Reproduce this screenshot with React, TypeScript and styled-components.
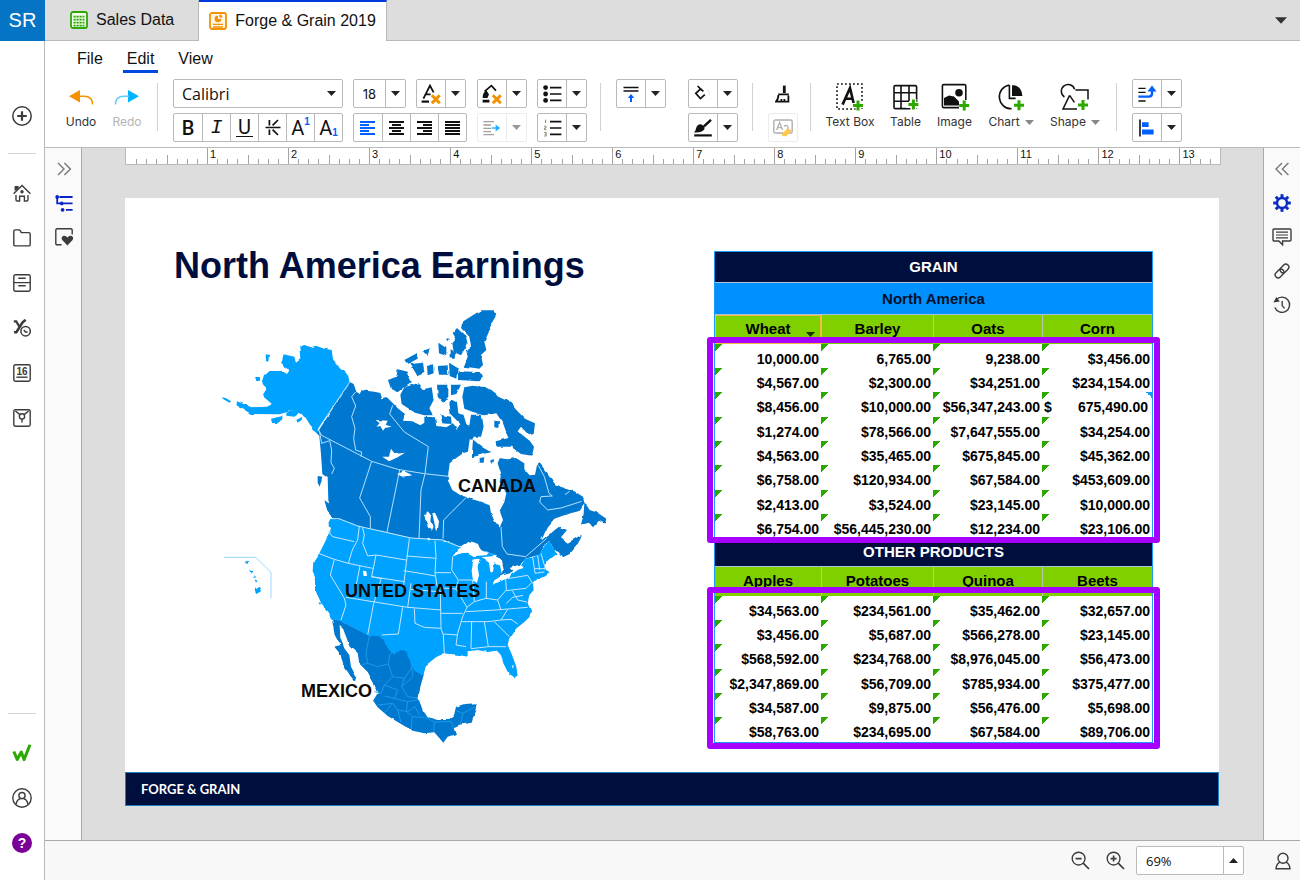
import React from "react";
import styled, { createGlobalStyle, css } from "styled-components";

const sans = `"Liberation Sans", Arial, sans-serif`;
const navy = "#000e3d";
const line = "#b9b9b9";
const ink = "#111";
const blue = "#0060ff";
const orange = "#f39200";
const green = "#2ca800";

const GlobalStyle = createGlobalStyle`
  * { box-sizing: border-box; }
  body { margin: 0; background: #fff; font-family: ${sans}; color: ${ink}; }
  button, input, select { font: inherit; color: inherit; margin: 0; }
  button { background: none; border: 0; padding: 0; cursor: pointer; }
  svg { display: block; }
`;

/* ---------- frame ---------- */

const Shell = styled.div`
  display: flex;
  min-height: 100vh;
`;

const Rail = styled.nav`
  display: flex;
  flex-direction: column;
  flex: 0 0 45px;
  padding-bottom: 15px;
  background: #fff;
  border-right: 1px solid ${line};
`;

const Account = styled.a`
  display: flex;
  align-items: center;
  justify-content: center;
  height: 41px;
  margin: 0 -1px 52px 0;
  background: #0674c4;
  color: #fff;
  font-size: 20px;
  text-decoration: none;
`;

const RailButton = styled.button`
  display: flex;
  align-items: center;
  justify-content: center;
  height: 45px;
`;

const RailRule = styled.hr<{ $push?: boolean }>`
  width: 28px;
  height: 1px;
  margin: ${(p) => (p.$push ? "auto" : "15px")} 8px 16px;
  border: 0;
  background: #d5d5d5;
`;

const Main = styled.div`
  display: flex;
  flex-direction: column;
  flex: 1;
  min-width: 0;
`;

const TabBar = styled.div`
  display: flex;
  height: 41px;
  background: #ddd;
  border-bottom: 1px solid ${line};
`;

const Tab = styled.button<{ $active?: boolean }>`
  display: flex;
  align-items: center;
  gap: 8px;
  height: 41px;
  padding: 0 24px 0 25px;
  font-size: 16px;
  white-space: nowrap;
  border-right: 1px solid ${line};
  border-bottom: 1px solid ${line};
  ${(p) =>
    p.$active &&
    css`
      padding: 0 10px 2px;
      background: #fff;
      border-top: 2px solid #0039dd;
      border-bottom: 0;
    `}
`;

const TabMore = styled.button`
  margin-left: auto;
  padding: 0 13px;
`;

const Menu = styled.nav`
  display: flex;
  gap: 16px;
  padding: 4px 28px 0;
`;

const MenuLink = styled.a<{ $active?: boolean }>`
  padding: 4px 4px 1px;
  font-size: 16px;
  line-height: 20px;
  color: ${ink};
  text-decoration: none;
  border-bottom: 3px solid ${(p) => (p.$active ? "#0049e0" : "transparent")};
`;

/* ---------- toolbar ---------- */

const Toolbar = styled.div`
  display: flex;
  align-items: flex-start;
  height: 75px;
  padding: 6px 0 0 11px;
  border-bottom: 1px solid ${line};
`;

const Stack = styled.div<{ $after?: number }>`
  display: flex;
  flex-direction: column;
  gap: 5px;
  margin-right: ${(p) => p.$after ?? 10}px;
`;

const Line = styled.div`
  display: flex;
  gap: 10px;
`;

const Group = styled.div<{ $faint?: boolean; $bare?: boolean }>`
  display: flex;
  height: 29px;
  background: #fff;
  border: 1px solid ${(p) => (p.$bare ? "transparent" : p.$faint ? "#ececec" : line)};
  border-radius: 2px;
  > * + * {
    border-left: 1px solid ${(p) => (p.$faint ? "#ececec" : line)};
  }
`;

const Cell = styled.button<{ $narrow?: boolean }>`
  display: flex;
  align-items: center;
  justify-content: center;
  width: ${(p) => (p.$narrow ? 20 : 28)}px;
  height: 27px;
`;

const Letter = styled.span<{ $kind: "bold" | "italic" | "under" | "plain" }>`
  font-size: 20px;
  line-height: 24px;
  font-family: ${(p) => (p.$kind === "italic" ? `"Liberation Mono", monospace` : "Roboto, sans-serif")};
  font-weight: ${(p) => (p.$kind === "bold" ? 500 : 400)};
  font-style: ${(p) => (p.$kind === "italic" ? "italic" : "normal")};
  ${(p) =>
    p.$kind === "under" &&
    css`
      line-height: 18px;
      padding: 0 2px;
      border-bottom: 1px solid ${ink};
    `}
`;

const Script = styled.span<{ $low?: boolean }>`
  align-self: ${(p) => (p.$low ? "flex-end" : "flex-start")};
  padding: 3px 0;
  font-size: 10px;
  line-height: 10px;
  font-weight: 700;
  color: ${blue};
`;

const FontBox = styled.label`
  display: flex;
  align-items: center;
  width: 170px;
  height: 29px;
  padding-right: 6px;
  border: 1px solid ${line};
  border-radius: 2px;
  background: #fff;
`;

const FontSelect = styled.select`
  flex: 1;
  min-width: 0;
  height: 27px;
  padding: 0 8px;
  font: 16px "Open Sans", sans-serif;
  border: 0;
  background: transparent;
  appearance: none;
`;

const SizeInput = styled.input`
  width: 31px;
  height: 27px;
  padding: 0;
  font: 13px Inter, sans-serif;
  text-align: center;
  border: 0;
  background: transparent;
`;

const Rule = styled.div<{ $before: number; $after: number }>`
  flex: 0 0 1px;
  height: 48px;
  margin: 4px ${(p) => p.$after}px 0 ${(p) => p.$before}px;
  background: #d2d2d2;
`;

const Tool = styled.button<{ $w: number; $off?: boolean }>`
  display: flex;
  flex-direction: column;
  align-items: center;
  width: ${(p) => p.$w}px;
  font-family: Inter, sans-serif;
  font-size: 12px;
  line-height: 14px;
  color: ${(p) => (p.$off ? "#b5b5b5" : "#333")};
`;

const Glyph = styled.span`
  display: flex;
  align-items: center;
  justify-content: center;
  height: 36px;
`;

const ToolLabel = styled.span`
  display: flex;
  align-items: center;
  gap: 5px;
  white-space: nowrap;
`;

/* ---------- workspace ---------- */

const Workspace = styled.div`
  display: flex;
  flex: 1;
`;

const SidePanel = styled.aside<{ $right?: boolean }>`
  display: flex;
  flex-direction: column;
  flex: 0 0 37px;
  padding-top: 4px;
  background: #fafafa;
  ${(p) =>
    p.$right
      ? css`
          padding-right: 1px;
          border-left: 1px solid #a9a9a9;
        `
      : css`
          padding-left: 2px;
          border-right: 1px solid #a9a9a9;
        `}
`;

const PanelButton = styled.button`
  display: flex;
  align-items: center;
  justify-content: center;
  height: 34px;
`;

const Canvas = styled.main`
  display: flex;
  flex-direction: column;
  flex: 1;
  min-width: 0;
  padding: 0 44px 34px 43px;
  background: #ddd;
`;

const Ruler = styled.div`
  display: flex;
  height: 17px;
  margin: 0 -2px 33px 0;
  background: #fff;
  border: 1px solid ${line};
  border-top: 0;
`;

const Inch = styled.div<{ $ticks: number }>`
  position: relative;
  display: flex;
  align-items: flex-end;
  flex: ${(p) => p.$ticks} 1 0;
`;

const Tick = styled.span<{ $h: number }>`
  flex: 1;
  height: ${(p) => p.$h}px;
  border-left: 1px solid ${(p) => (p.$h ? "#a5a5a5" : "transparent")};
`;

const InchLabel = styled.span`
  position: absolute;
  left: 3px;
  top: 0;
  font-size: 11px;
  line-height: 12px;
`;

const Slide = styled.article`
  display: flex;
  flex-direction: column;
  background: #fff;
`;

const SlideBody = styled.div`
  display: flex;
  justify-content: space-between;
  height: 574px;
  padding-right: 66px;
`;

const Story = styled.section`
  padding: 47px 0 0 49px;
`;

const Title = styled.h1`
  margin: 0 0 13px;
  font-size: 36px;
  line-height: 42px;
  color: ${navy};
`;

const MapFigure = styled.figure`
  margin: 0 0 0 37px;
`;

const SlideFooter = styled.footer`
  height: 34px;
  padding-left: 15px;
  font: 700 13px/32px Lato, sans-serif;
  color: #fff;
  background: ${navy};
  border: 1px solid #1d7fc4;
`;

/* ---------- tables ---------- */

const Report = styled.section`
  position: relative;
  margin-top: 53px;
  width: 439px;
`;

const Grid = styled.table`
  width: 100%;
  table-layout: fixed;
  border-collapse: separate;
  border-spacing: 0;
  border: 1px solid #1a9cf5;
  font-weight: 700;
  color: #000;
`;

const Banner = styled.th<{ $tone: "navy" | "sky"; $h: number }>`
  height: ${(p) => p.$h}px;
  padding: 0;
  font-size: 15px;
  line-height: 16px;
  color: ${(p) => (p.$tone === "navy" ? "#fff" : "#00102a")};
  background: ${(p) => (p.$tone === "navy" ? navy : "#0090ff")};
  border-bottom: 1px solid #a9c4d8;
`;

const ColHead = styled.th<{ $selected?: boolean }>`
  position: relative;
  height: 29px;
  padding: 0 0 2px;
  font-size: 15px;
  line-height: 16px;
  background: #80d000;
  border-left: 1px solid #bcc6ae;
  &:first-child { border-left: 0; }
  ${(p) =>
    p.$selected &&
    css`
      box-shadow: inset 0 0 0 1px #f0b848;
    `}
`;

const FilterMark = styled.button`
  position: absolute;
  right: 6px;
  bottom: 7px;
`;

const Row = styled.tr`
  height: 24px;
  &:nth-child(3n) { height: 25px; }
`;

const Amount = styled.td<{ $note?: boolean }>`
  padding: 5px 2px 0 0;
  font-size: 14px;
  line-height: 18px;
  text-align: right;
  white-space: nowrap;
  background:
    linear-gradient(135deg, ${green} 50%, transparent 50%) 0 0 / 8px 8px no-repeat
    ${(p) => (p.$note ? ", linear-gradient(225deg, #1a9cf5 50%, transparent 50%) 100% 0 / 6px 6px no-repeat" : "")};
`;

const Split = styled.span`
  display: flex;
  justify-content: space-between;
  padding: 0 2px;
`;

const Highlight = styled.div<{ $top: number; $h: number }>`
  position: absolute;
  left: -7px;
  right: -7px;
  top: ${(p) => p.$top}px;
  height: ${(p) => p.$h}px;
  border: 6px solid #a600ff;
  border-radius: 3px;
  pointer-events: none;
`;

/* ---------- status bar ---------- */

const StatusBar = styled.footer`
  display: flex;
  align-items: center;
  justify-content: flex-end;
  gap: 16px;
  height: 40px;
  padding-right: 9px;
  background: #f8f8f8;
  border-top: 1px solid #a9a9a9;
`;

const ZoomBox = styled(Group)`
  margin: 0 15px 0 -5px;
`;

const ZoomInput = styled.input`
  width: 86px;
  height: 27px;
  padding: 0 9px;
  font: 13px "Open Sans", sans-serif;
  border: 0;
`;

/* ---------- icons ---------- */

type ArtProps = { w: number; h: number; vb?: string; children: React.ReactNode };
const Art = ({ w, h, vb, children }: ArtProps) => (
  <svg width={w} height={h} viewBox={vb ?? `0 0 ${w} ${h}`} fill="none" stroke="#3c3c3c" strokeWidth="1.4" aria-hidden="true">
    {children}
  </svg>
);

const Caret = ({ color = "#222", up = false, big = false }: { color?: string; up?: boolean; big?: boolean }) => (
  <Art w={big ? 12 : 9} h={big ? 7 : 5} vb="0 0 9 5">
    <path d={up ? "M0 5L4.5 0L9 5Z" : "M0 0L9 0L4.5 5Z"} fill={color} stroke="none" />
  </Art>
);

const Plus = ({ x, y }: { x: number; y: number }) => (
  <path d={`M${x - 5} ${y}H${x + 5}M${x} ${y - 5}V${y + 5}`} stroke={green} strokeWidth="3" />
);

const Cross = ({ x, y }: { x: number; y: number }) => (
  <path d={`M${x - 4} ${y - 4}L${x + 4} ${y + 4}M${x + 4} ${y - 4}L${x - 4} ${y + 4}`} stroke={orange} strokeWidth="3" />
);

const icons = {
  sheet: (
    <Art w={18} h={18}>
      <rect x="1" y="1" width="16" height="16" rx="2" stroke={green} strokeWidth="1.8" fill="#f4fcee" />
      <path d="M3.5 5.6H14.5M3.5 8.6H14.5M3.5 11.6H14.5M3.5 14.6H14.5" stroke={green} strokeWidth="1.9" strokeDasharray="2.2 .8" />
    </Art>
  ),
  deck: (
    <Art w={18} h={18}>
      <rect x="1" y="1" width="16" height="16" rx="2" stroke={orange} strokeWidth="1.8" fill="#fff6e6" />
      <path d="M9 3.4A3.4 3.4 0 1 0 12.4 7H9Z" fill={orange} stroke="none" />
      <path d="M10.4 2.6V5.6H13.4A3 3 0 0 0 10.4 2.6Z" fill={orange} stroke="none" />
      <path d="M4 12.3H14M4 15H14" stroke={orange} strokeWidth="1.3" />
    </Art>
  ),
  plus: (
    <Art w={20} h={20}>
      <circle cx="10" cy="10" r="9.2" strokeWidth="1.5" />
      <path d="M10 5.2V14.8M5.2 10H14.8" strokeWidth="2.2" />
    </Art>
  ),
  home: (
    <Art w={18} h={18}>
      <path d="M.6 9.8L9 1.4L17.4 9.8M3 11V15.8Q3 17 4.2 17H6.6V12.2H11.4V17H13.8Q15 17 15 15.8V11" />
      <path d="M1.6 2H5.6V4.6L1.6 7Z" fill="#3c3c3c" stroke="none" />
      <circle cx="9" cy="7.8" r="1.7" fill="#3c3c3c" stroke="none" />
    </Art>
  ),
  folder: (
    <Art w={18} h={18}>
      <path d="M.8 15.4V2.4Q.8 .9 2.3 .9H5.9Q7 .9 7.4 1.9L8.2 3.6H15.7Q17.2 3.6 17.2 5.1V15.4Q17.2 16.9 15.7 16.9H2.3Q.8 16.9 .8 15.4Z" />
    </Art>
  ),
  drawer: (
    <Art w={18} h={18}>
      <rect x=".8" y=".8" width="16.4" height="16.4" rx="1.6" />
      <path d="M.8 8.6H17.2M5.3 4.2H12.7M5.3 11.8H12.7" />
    </Art>
  ),
  formula: (
    <Art w={18} h={18}>
      <path d="M.8 2.4H3.2L6.4 7.6" strokeWidth="2.2" />
      <path d="M12.6 .8L9.4 3.6L3.4 13.2H1" strokeWidth="2.6" />
      <circle cx="12.6" cy="12.2" r="4.7" fill="#fff" strokeWidth="1.5" />
      <path d="M10.8 11L12.4 13H14.6" strokeWidth="1.3" />
    </Art>
  ),
  image: (
    <Art w={18} h={18}>
      <rect x=".8" y=".8" width="16.4" height="16.4" rx="1.6" />
      <path d="M2.4 2L6.6 5.4M15.6 2L11.4 5.4M9 9.6V13.6" />
      <circle cx="9" cy="7.4" r="2.6" fill="#fff" />
    </Art>
  ),
  brand: (
    <Art w={20} h={18}>
      <path d="M1.8 7.5L5.2 15.4L9.3 8L12 15.6L18 .8" stroke={green} strokeWidth="3" strokeLinejoin="round" />
    </Art>
  ),
  user: (
    <Art w={20} h={20}>
      <circle cx="10" cy="10" r="9.2" />
      <circle cx="10" cy="7.6" r="3.1" />
      <path d="M4 16.4Q5.2 11 8.4 10.8M16 16.4Q14.8 11 11.6 10.8" />
    </Art>
  ),
  undo: (
    <Art w={26} h={16}>
      <path d="M1 7.3L12 1V13.6Z" fill={orange} stroke="none" />
      <path d="M11 7.3H16Q24.6 7.3 24.6 15.6" stroke={orange} />
    </Art>
  ),
  redo: (
    <Art w={26} h={16}>
      <path d="M25 7.3L14 1V13.6Z" fill="#00b4ff" stroke="none" />
      <path d="M15 7.3H10Q1.4 7.3 1.4 15.6" stroke="#5fccff" />
    </Art>
  ),
  strike: (
    <Art w={16} h={17}>
      <path d="M4.4 1V6.4M4.4 10.6V16M13 1L7.6 6.4M7.6 10.6L13 16M.5 8.5H15.5" stroke={ink} strokeWidth="1.7" />
    </Art>
  ),
  textColor: (
    <Art w={20} h={20}>
      <path d="M2.4 14.6L9 1.6L12.6 8.4M5 10.4H9.6" stroke={ink} strokeWidth="1.8" />
      <path d="M.6 17.6H8" stroke={ink} strokeWidth="2.2" />
      <Cross x={14.8} y={15.2} />
    </Art>
  ),
  fillClear: (
    <Art w={20} h={20}>
      <path d="M2.6 7.4L9.4 1.6L14 6.6" stroke={ink} strokeWidth="1.7" />
      <path d="M4.2 6L7 10.6L5.4 14H.8Q0 10 4.2 6ZM.6 15.8H7.4V18.4H.6Z" fill={ink} stroke="none" />
      <Cross x={14.8} y={15.2} />
    </Art>
  ),
  bullets: (
    <Art w={19} h={18}>
      <g fill={ink} stroke="none">
        <circle cx="2.6" cy="2.6" r="2.4" />
        <circle cx="2.6" cy="9" r="2.4" />
        <circle cx="2.6" cy="15.4" r="2.4" />
      </g>
      <path d="M7 2.6H18.4M7 9H18.4M7 15.4H18.4" stroke={ink} strokeWidth="1.6" />
    </Art>
  ),
  numbers: (
    <Art w={19} h={18}>
      <path d="M2.6 .6V4M1.2 7.2H3V9H1.4V10.6H3.4M1.2 13.4H3.2V17H1.2M1.6 15.2H3" stroke="#8b8b70" strokeWidth="1" />
      <path d="M7 2.6H18.4M7 9H18.4M7 15.4H18.4" stroke={ink} strokeWidth="1.6" />
    </Art>
  ),
  indent: (
    <Art w={18} h={16}>
      <path d="M.4 1.6H11M.4 5H8M.4 8.4H8M.4 11.6H8M.4 14.6H11" stroke="#a0a0a0" strokeWidth="1.3" />
      <path d="M8.6 8H14" stroke="#22b0ff" />
      <path d="M12.6 4.4L17.2 8L12.6 11.6Z" fill="#22b0ff" stroke="none" />
    </Art>
  ),
  vertical: (
    <Art w={16} h={18}>
      <path d="M.5 2.4H15.5M.5 6H15.5" stroke={ink} strokeWidth="1.5" />
      <path d="M8 10V17" stroke={blue} strokeWidth="2" />
      <path d="M4.8 13L8 9L11.2 13Z" fill={blue} stroke="none" />
    </Art>
  ),
  bucket: (
    <Art w={20} h={18}>
      <path d="M4.6 1L7.6 4L2.8 8.4L7.4 13.6L11.8 9.6M7.6 4L10.4 6.4" stroke={ink} strokeWidth="1.7" />
      <path d="M14 4.4Q17 7.4 16.6 11" stroke="#ececec" />
    </Art>
  ),
  pen: (
    <Art w={20} h={18}>
      <path d="M11 7.4L18 .8" stroke={ink} strokeWidth="2.4" />
      <path d="M.8 13.4Q2.6 12.4 3 9.4Q4.4 4.8 8.4 5.4Q12.8 7 11.2 10.6Q8.6 14 .8 13.4Z" fill={ink} stroke="none" />
      <path d="M1.2 16.4H18.8" stroke={ink} strokeWidth="2.2" />
    </Art>
  ),
  painter: (
    <Art w={16} h={18}>
      <path d="M9.3 .6V8" stroke={ink} strokeWidth="2.8" />
      <path d="M3.2 9.4H13.8M3.4 10Q3.4 14.4 1 16.6H13.4V10.4M6.4 16V14M9.4 16V14" stroke={ink} strokeWidth="1.8" />
    </Art>
  ),
  clearFormat: (
    <Art w={21} h={18}>
      <rect x=".8" y="1" width="18.4" height="13" rx="1.6" stroke="#b0b0b0" fill="#fff" />
      <path d="M3.6 11L6.6 3.6L9.6 11M4.8 8.6H8.4M11 7Q15 5.4 15 9V11" stroke="#b5b5b5" />
      <path d="M8.6 15L14.4 9.4L19 11.6L13.2 17.2H9.6Z" fill="#ffc84a" stroke="none" />
    </Art>
  ),
  textBox: (
    <Art w={30} h={30}>
      <rect x="2" y="2" width="25" height="25" stroke={ink} strokeWidth="1.6" strokeDasharray="1.8 2.2" />
      <path d="M7.6 22.6L15 6L18.6 21M9.8 16.8H17" stroke={ink} strokeWidth="2.6" />
      <path d="M17 23.4H29M23 17.4V29" stroke="#fff" strokeWidth="5" />
      <Plus x={23} y={23.4} />
    </Art>
  ),
  table: (
    <Art w={28} h={28}>
      <rect x="2" y="2.6" width="22.6" height="23" rx="1.4" stroke={ink} strokeWidth="1.6" />
      <path d="M2 9.8H24.6M2 18.2H17M9 2.6V25.6M17 2.6V18" stroke={ink} strokeWidth="1.6" />
      <path d="M14 22H28M21.4 16V29" stroke="#fff" strokeWidth="6" />
      <Plus x={21.4} y={21.4} />
    </Art>
  ),
  picture: (
    <Art w={30} h={28}>
      <rect x="2.4" y="1.6" width="23.4" height="23" rx="1.4" stroke={ink} strokeWidth="1.6" />
      <circle cx="19" cy="9.8" r="3.8" fill={ink} stroke="none" />
      <path d="M4 15L9 12.4L14 13.4L19 18.4V22.6H4Z" fill={ink} stroke="none" />
      <path d="M19 23.4H30M24.2 17V29" stroke="#fff" strokeWidth="6" />
      <Plus x={24.2} y={22.6} />
    </Art>
  ),
  chart: (
    <Art w={28} h={28}>
      <path d="M12.2 2A12 12 0 0 0 14.6 25.8M12.4 2V15.4H18.6" stroke={ink} strokeWidth="1.6" />
      <path d="M15 2.2H17Q25 3.6 25.4 13H15Z" fill={ink} stroke="none" />
      <Plus x={22} y={22.2} />
    </Art>
  ),
  shape: (
    <Art w={30} h={30}>
      <path d="M4.4 15A6.8 6.8 0 1 1 14.6 7.2M15.4 8H28V17.4M9.6 13.4L3 27H17M9.6 13.4L14.4 20.4" stroke={ink} strokeWidth="1.5" />
      <Plus x={23} y={23} />
    </Art>
  ),
  order: (
    <Art w={20} h={18}>
      <path d="M1.4 3.4H8.6M1.4 7.4H8.6M1.4 16H8.6" stroke={ink} strokeWidth="1.3" />
      <path d="M1.4 11.6H12Q15 11.6 15 8.6V5" stroke={blue} strokeWidth="2.4" />
      <path d="M10.4 6.6L15 .4L19.6 6.6Z" fill={blue} stroke="none" />
    </Art>
  ),
  alignObj: (
    <Art w={18} h={18}>
      <path d="M2 .6V17.4" stroke={ink} strokeWidth="1.6" />
      <path d="M4 3.2H10.6V8H4ZM4 10.4H15.6V15.4H4Z" fill={blue} stroke="none" />
    </Art>
  ),
  expand: (
    <Art w={16} h={14}>
      <path d="M2 1L8 7L2 13M8.4 1L14.4 7L8.4 13" stroke="#777" />
    </Art>
  ),
  collapse: (
    <Art w={16} h={14}>
      <path d="M8 1L2 7L8 13M14.4 1L8.4 7L14.4 13" stroke="#777" />
    </Art>
  ),
  outline: (
    <Art w={18} h={17}>
      <path d="M4.4 2H17.6M8.4 8.4H17.6M11 14.8H17.6M2.2 2V8.4H6" stroke="#0a24c4" strokeWidth="1.8" />
      <g fill="#0a24c4" stroke="none">
        <circle cx="2.2" cy="2" r="1.9" />
        <circle cx="6.8" cy="8.4" r="1.9" />
        <circle cx="7.6" cy="14.8" r="1.9" />
      </g>
    </Art>
  ),
  favorite: (
    <Art w={19} h={18}>
      <path d="M6.6 16.8H2.2Q.8 16.8 .8 15.4V2.2Q.8 .8 2.2 .8H15.8Q17.2 .8 17.2 2.2V6.4" />
      <path d="M12.4 17.4L7.2 12Q5.8 9.6 8 8Q10.6 7 12.4 9.4Q14.2 7 16.8 8Q19 9.6 17.6 12Z" fill="#3c3c3c" stroke="none" />
    </Art>
  ),
  gear: (
    <Art w={18} h={18}>
      <circle cx="9" cy="9" r="5" stroke="#0a2cc0" strokeWidth="2.4" />
      {[0, 45, 90, 135, 180, 225, 270, 315].map((a) => (
        <path key={a} d="M9 3.4V.2" stroke="#0a2cc0" strokeWidth="3" transform={`rotate(${a} 9 9)`} />
      ))}
    </Art>
  ),
  comment: (
    <Art w={20} h={18}>
      <path d="M1 2.2Q1 1 2.2 1H17.8Q19 1 19 2.2V11.8Q19 13 17.8 13H10.6V16.8L6.8 13H2.2Q1 13 1 11.8Z" />
      <path d="M4 4.2H16M4 7H16M4 9.8H16" strokeWidth="1.2" />
    </Art>
  ),
  link: (
    <Art w={16} h={16}>
      <g transform="rotate(-45 8 8)">
        <rect x="-.4" y="5" width="9.8" height="6" rx="3" />
        <rect x="6.6" y="5" width="9.8" height="6" rx="3" />
      </g>
    </Art>
  ),
  history: (
    <Art w={18} h={18}>
      <path d="M3.4 3.6A7.6 7.6 0 1 1 1.9 11.4M9.2 5V9.6L11.6 12.4" />
      <path d="M.4 6.4L3.4 1L6.8 5.6Z" fill="#3c3c3c" stroke="none" />
    </Art>
  ),
  person: (
    <Art w={16} h={18}>
      <circle cx="8" cy="6.2" r="5" />
      <path d="M4.8 10.2Q1.4 12 1 16.8H15Q14.6 12 11.2 10.2" />
    </Art>
  ),
};

const magnifier = (plus: boolean) => (
  <Art w={19} h={19}>
    <circle cx="7.6" cy="7.6" r="6.4" />
    <path d={`M12.2 12.2L18 18M4.6 7.6H10.6${plus ? "M7.6 4.6V10.6" : ""}`} strokeWidth="1.7" />
  </Art>
);

const alignIcon = (starts: number[], ends: number[], color = ink) => (
  <Art w={16} h={14}>
    <path
      d={starts.map((s, i) => `M${s} ${1 + i * 3}H${ends[i]}`).join("")}
      stroke={color}
      strokeWidth="1.8"
    />
  </Art>
);

const CalendarFace = () => (
  <Art w={18} h={18}>
    <rect x=".8" y=".8" width="16.4" height="16.4" rx="1.6" />
    <path d="M3.4 13.2H14.6" />
    <text x="9" y="10.6" fontSize="10" fontWeight="700" textAnchor="middle" fill="#3c3c3c" stroke="none">16</text>
  </Art>
);

const HelpFace = () => (
  <Art w={20} h={20}>
    <circle cx="10" cy="10" r="10" fill="#7b0096" stroke="none" />
    <text x="10" y="15" fontSize="14" fontWeight="700" textAnchor="middle" fill="#fff" stroke="none">?</text>
  </Art>
);

/* ---------- map ---------- */

const canada = "#0078d0";
const usa = "#00a2ff";

const NorthAmericaMap = () => (
  <svg width="400" height="450" viewBox="0 0 400 450" role="img" aria-label="Map of North America">
    <defs>
      <filter id="coast" x="-5%" y="-5%" width="110%" height="110%">
        <feTurbulence type="fractalNoise" baseFrequency="0.036" numOctaves="2" seed="4" result="n" />
        <feDisplacementMap in="SourceGraphic" in2="n" scale="9" xChannelSelector="R" yChannelSelector="G" />
      </filter>
    </defs>
    <g transform="scale(.33333)">
      <g filter="url(#coast)">
        {/* Alaska */}
        <g fill={usa}>
          <path d="M265 140L280 135L300 142L315 137L340 146L362 150L366 178L388 206L412 228L416 247L321 386L325 406L305 390L285 358L272 342L250 330L205 343L120 342L76 314L78 304L122 322L172 320L182 311L154 287L166 268L154 250L162 225L176 213L214 213L228 222L236 210L218 200L211 188L218 163L250 170L254 186L268 175Z" />
          <path d="M164 163L174 165L172 185L165 183ZM136 230L148 232L146 244L137 242ZM30 292L44 294L60 304L56 308L40 299ZM180 356L214 348L214 358L196 373L183 368ZM226 338L258 326L266 340L250 350L226 347ZM256 360L274 350L272 360L260 368Z" />
        </g>
        {/* Canadian mainland */}
        <path
          fill={canada}
          d="M416 246L428 252L436 275L446 282L452 271L490 275L508 279L514 298L530 294L548 312L562 326L582 342L576 362L604 364L628 376L640 368L640 350L672 352L676 378L706 382L726 370L738 386L748 372L716 340L712 308L722 298L738 306L742 340L758 346L766 372L780 386L788 412L776 430L780 452L756 460L736 474L716 490L710 540L724 570L756 590L800 602L836 616L840 640L850 662L866 682L876 660L866 632L880 606L886 580L866 546L870 522L860 490L866 475L890 478L915 474L940 490L940 508L956 526L972 524L978 496L986 490L1010 520L1030 550L1060 566L1090 574L1116 590L1120 610L1102 634L1070 642L1030 656L1010 680L1000 702L990 722L1012 704L1044 680L1068 690L1050 712L1070 728L1112 704L1102 732L1076 762L1056 772L1046 756L1030 750L1014 720L1000 736L986 764L942 776L918 806L888 824L860 846L882 820L868 778L830 755L745 740L695 720L600 714L525 697L440 678L384 656L362 648L352 600L350 534L334 522L330 462L325 408L318 400Z"
        />
        <g fill={canada}>
          <path d="M320 528L334 530L326 560L320 548ZM340 600L356 612L372 636L384 660L374 664L350 636Z" />
          {/* Arctic islands */}
          <path d="M560 208L590 215L602 250L576 264L560 277L540 268L531 240L556 230Z" />
          <path d="M568 284L580 262L620 250L636 268L662 262L668 300L655 325L666 346L640 346L612 338L572 312Z" />
          <path d="M757 64L795 40L815 31L846 31L856 45L842 70L832 100L820 125L826 150L810 165L816 195L805 206L758 200L770 170L765 150L780 140L775 110L750 84Z" />
          <path d="M738 84L765 110L770 132L750 166L728 156L724 130L736 116L725 100Z" />
          <path d="M740 214L806 216L816 232L805 244L742 240ZM714 188L740 204L736 236L716 228Z" />
          <path d="M682 128L706 144L706 168L684 160ZM634 152L656 144L650 168ZM580 180L620 158L620 176L590 192ZM598 192L636 188L640 216L618 226ZM648 198L666 193L668 220L650 226ZM680 198L710 196L712 224L684 224ZM716 148L734 158L730 174L716 172ZM706 115L716 116L714 124Z" />
          <path d="M678 254L712 254L712 290L696 308L680 290ZM720 254L750 254L736 282L720 286ZM688 344L720 350L722 372L694 370Z" />
          <path d="M760 262L786 257L830 262L862 286L892 300L916 330L942 356L972 370L968 402L954 406L930 380L920 394L956 422L969 440L963 467L930 462L900 440L856 440L854 424L892 414L876 370L856 340L820 346L786 336L760 326L754 290Z" />
          <path d="M780 344L812 344L818 380L810 410L784 410L774 384ZM785 418L812 440L838 456L784 472L778 450ZM806 474L820 472L818 488L806 488ZM838 480L850 478L846 492ZM850 362L864 364L862 384L850 382Z" />
          {/* Newfoundland */}
          <path d="M1120 606L1136 630L1160 638L1186 656L1182 672L1164 662L1146 682L1134 668L1110 674L1118 642Z" />
        </g>
        {/* northern lakes */}
        <g fill="#fff">
          <path d="M494 360L530 362L524 374L542 380L522 384L516 392L508 378L496 380L506 370ZM514 470L534 470L540 446L552 462L582 458L560 472L534 484ZM558 522L580 514L604 526L574 530ZM640 646L650 634L660 646L658 664L668 680L662 692L650 678ZM664 640L672 638L684 664L680 694L672 678Z" />
          <path d="M776 418L786 420L782 470L770 462ZM1000 700L1030 668L1080 656L1110 640L1106 670L1080 672L1070 690L1046 676L1020 700Z" />
        </g>
      </g>
      <g transform="translate(0 660)">
        <g filter="url(#coast)">
          <path
            fill={canada}
            d="M362 292L390 296L475 340L512 340L600 390L638 465L628 500L622 535L635 570L650 592L680 600L715 600L728 590L735 560L760 552L797 550L793 572L782 608L745 614L728 622L735 642L710 650L697 668L670 637L640 640L605 632L570 612L530 588L500 562L486 542L500 520L488 488L470 456L446 432L440 402L416 380L406 352L396 326L386 318L388 350L400 385L415 405L420 440L436 470L432 484L420 470L400 440L386 400L370 380L388 374L370 340Z"
          />
          <path
            fill={usa}
            d="M358 -4L384 -4L440 18L525 37L600 54L695 60L745 80L830 95L862 112L872 160L858 188L890 172L920 150L940 117L970 110L985 105L1000 77L1015 62L1030 90L1040 100L1025 112L1004 126L1000 148L1016 160L1000 170L980 176L966 190L968 210L955 226L950 250L960 272L955 292L940 306L915 326L895 355L890 375L902 402L916 440L920 466L910 475L895 465L877 430L870 406L858 392L830 396L800 390L770 394L770 410L745 405L700 400L675 412L645 436L637 467L610 452L595 420L585 393L565 390L550 407L530 385L512 348L475 347L390 304L360 298L355 280L330 248L315 215L315 182L305 150L307 125L325 100L345 60L360 25L352 10Z"
          />
          {/* southern Ontario between the lakes */}
          <path fill={canada} d="M866 108L900 118L944 112L922 136L900 152L872 166L856 180L880 150Z" />
          <g fill={usa}>
            <path d="M103 122L112 124L110 132L103 130ZM118 150L127 154L122 161ZM130 166L136 172L130 174ZM134 178L142 182L138 188ZM133 206L144 200L150 214L136 222L131 214ZM322 246L332 250L326 254Z" />
          </g>
          {/* Great Lakes */}
          <g fill="#fff">
            <path d="M724 110L742 88L772 66L800 74L812 92L834 98L826 106L790 108L770 98L748 100Z" />
            <path d="M788 118L806 116L800 140L804 166L798 188L786 186L782 152Z" />
            <path d="M812 112L850 108L872 118L876 134L862 136L850 126L846 152L838 156L834 128Z" />
            <path d="M846 184L870 168L902 158L898 172L868 184L848 192ZM896 144L930 132L938 144L906 154ZM456 152L466 154L468 168L458 168ZM902 436L908 438L906 446L901 444Z" />
          </g>
        </g>
        {/* state lines */}
        <path
          fill="none"
          stroke="#c5e8ff"
          strokeWidth="3"
          strokeLinejoin="round"
          d="M358 -4L384 -4L440 18L525 37L600 54L695 60L745 80M350 32L365 50L430 65M445 18L440 60L424 90L412 130M322 100L370 118L412 130L485 145M370 118L358 165L400 235L405 255L390 300M455 24L460 45L455 70L470 108L495 105L585 120M595 55L578 195M587 108L675 115M672 62L675 110L672 158L720 158M578 152L640 162L672 168M495 105L482 170L580 185M447 138L430 225M405 232L590 262L690 270M510 178L488 250L470 345M600 190L590 262M600 208L680 215M480 170L512 176M575 262L562 342L512 345M610 266L612 310L640 322L690 325M672 158L678 198L688 215L690 325L697 345L700 400M680 203L735 207M690 280L755 280M697 342L740 345M725 110L722 150L742 180L735 207L768 262L755 290L740 340L735 375L765 380M745 180H785M765 275L855 270L950 262M750 305L830 305L870 300L900 298L920 312M782 305L780 385M820 305L832 380M780 386L832 380L885 380M850 305L895 350M768 262L790 245L825 235L860 240M785 180L790 245M826 185V236M884 176L886 210L860 240L870 270M886 212L945 205L962 188M890 176L950 166L965 190M965 110L972 160L1000 156M980 106L986 150M972 146H1002M990 100L1002 142M870 300L890 268M886 250L905 232L936 226M904 212L920 240L948 246"
        />
        {/* Mexican states */}
        <path
          fill="none"
          stroke="#1ea4ee"
          strokeWidth="2.4"
          strokeLinejoin="round"
          d="M475 347L465 400L470 430L452 434M470 430L500 440L532 432L536 405L552 392M532 432L545 470L520 495L510 520L490 515M545 470L580 475L604 440M580 475L572 500L590 530L622 535M600 425L606 470L572 500M520 495L560 510L550 535L520 528M550 535L590 545L620 540M500 555L545 550L560 570L590 575L612 560M545 550L520 578M560 570L570 608M590 545L586 575L604 590L600 628M604 590L640 592M612 560L625 585M642 590L670 606L720 604M670 606L668 636M720 604L728 622M736 572L756 580L792 560M756 580L748 612M362 296L390 302L475 347"
        />
        <path d="M39 112H134L180 157V235" fill="none" stroke="#9bd8ff" strokeWidth="3" />
      </g>
      {/* province lines */}
      <path
        fill="none"
        stroke="#b5e0ff"
        strokeWidth="3"
        strokeLinejoin="round"
        d="M416 246L321 388L332 406L440 462L482 484L560 508L640 521L712 529M325 392L332 430L356 422L362 450L360 488L370 505L362 522M434 276L422 290L434 318L422 350L432 385L428 415L434 450L452 456L450 470M482 484L446 594L478 650V684M566 510L528 696M545 316L536 342L580 396L652 440L642 521L630 570L624 716M766 592L698 660L696 716M870 680L874 740L888 762L944 770L1006 716M982 496L1000 530L1014 580L1024 588L990 590L986 606L1010 630L1050 624L1112 604M1062 584L1076 574"
      />
    </g>
    <g fontSize="18" fontWeight="700" fill="#0a0a0a">
      <text x="247" y="192">CANADA</text>
      <text x="134" y="297">UNTED STATES</text>
      <text x="90" y="397">MEXICO</text>
    </g>
  </svg>
);

/* ---------- data ---------- */

const grains = [
  ["10,000.00", "6,765.00", "9,238.00", "$3,456.00"],
  ["$4,567.00", "$2,300.00", "$34,251.00", "$234,154.00"],
  ["$8,456.00", "$10,000.00", "$56,347,243.00", "$ 675,490.00"],
  ["$1,274.00", "$78,566.00", "$7,647,555.00", "$34,254.00"],
  ["$4,563.00", "$35,465.00", "$675,845.00", "$45,362.00"],
  ["$6,758.00", "$120,934.00", "$67,584.00", "$453,609.00"],
  ["$2,413.00", "$3,524.00", "$23,145.00", "$10,000.00"],
  ["$6,754.00", "$56,445,230.00", "$12,234.00", "$23,106.00"],
];

const others = [
  ["$34,563.00", "$234,561.00", "$35,462.00", "$32,657.00"],
  ["$3,456.00", "$5,687.00", "$566,278.00", "$23,145.00"],
  ["$568,592.00", "$234,768.00", "$8,976,045.00", "$56,473.00"],
  ["$2,347,869.00", "$56,709.00", "$785,934.00", "$375,477.00"],
  ["$34,587.00", "$9,875.00", "$56,476.00", "$5,698.00"],
  ["$58,763.00", "$234,695.00", "$67,584.00", "$89,706.00"],
];

const Rows = ({ data }: { data: string[][] }) => (
  <tbody>
    {data.map((row, r) => (
      <Row key={r}>
        {row.map((value, c) => {
          const parts = value.split(" ");
          return (
            <Amount key={c} $note={parts.length > 1}>
              {parts.length > 1 ? (
                <Split>
                  <span>{parts[0]}</span>
                  <span>{parts[1]}</span>
                </Split>
              ) : (
                value
              )}
            </Amount>
          );
        })}
      </Row>
    ))}
  </tbody>
);

const DropCell = ({ label, color }: { label: string; color?: string }) => (
  <Cell $narrow aria-label={label}>
    <Caret color={color} />
  </Cell>
);

const SplitButton = ({ label, icon, off }: { label: string; icon: React.ReactNode; off?: boolean }) => (
  <Group $faint={off}>
    <Cell aria-label={label}>{icon}</Cell>
    <DropCell label={`${label} options`} color={off ? "#999" : undefined} />
  </Group>
);

const inserts: [string, React.ReactNode, number, boolean][] = [
  ["Text Box", icons.textBox, 62, false],
  ["Table", icons.table, 49, false],
  ["Image", icons.picture, 49, false],
  ["Chart", icons.chart, 64, true],
  ["Shape", icons.shape, 64, true],
];

export default function App() {
  return (
    <>
      <GlobalStyle />
      <Shell>
        <Rail aria-label="Workspace">
          <Account href="#account">SR</Account>
          <RailButton aria-label="Create">{icons.plus}</RailButton>
          <RailRule />
          <RailButton aria-label="Home">{icons.home}</RailButton>
          <RailButton aria-label="Files">{icons.folder}</RailButton>
          <RailButton aria-label="Data">{icons.drawer}</RailButton>
          <RailButton aria-label="Scripts">{icons.formula}</RailButton>
          <RailButton aria-label="Tasks"><CalendarFace /></RailButton>
          <RailButton aria-label="Filings">{icons.image}</RailButton>
          <RailRule $push />
          <RailButton aria-label="Wdesk">{icons.brand}</RailButton>
          <RailButton aria-label="Profile">{icons.user}</RailButton>
          <RailButton aria-label="Help"><HelpFace /></RailButton>
        </Rail>
        <Main>
          <TabBar>
            <Tab>{icons.sheet}Sales Data</Tab>
            <Tab $active>{icons.deck}Forge &amp; Grain 2019</Tab>
            <TabMore aria-label="All tabs"><Caret big color="#333" /></TabMore>
          </TabBar>
          <Menu>
            <MenuLink href="#file">File</MenuLink>
            <MenuLink href="#edit" $active>Edit</MenuLink>
            <MenuLink href="#view">View</MenuLink>
          </Menu>
          <Toolbar>
            <Tool $w={50}><Glyph>{icons.undo}</Glyph>Undo</Tool>
            <Tool $w={42} $off><Glyph>{icons.redo}</Glyph>Redo</Tool>
            <Rule $before={9} $after={15} />
            <Stack>
              <FontBox>
                <FontSelect aria-label="Font" defaultValue="Calibri">
                  <option>Calibri</option>
                  <option>Arial</option>
                </FontSelect>
                <Caret />
              </FontBox>
              <Group>
                <Cell aria-label="Bold"><Letter $kind="bold">B</Letter></Cell>
                <Cell aria-label="Italic"><Letter $kind="italic">I</Letter></Cell>
                <Cell aria-label="Underline"><Letter $kind="under">U</Letter></Cell>
                <Cell aria-label="Strikethrough">{icons.strike}</Cell>
                <Cell aria-label="Superscript"><Letter $kind="plain">A</Letter><Script>1</Script></Cell>
                <Cell aria-label="Subscript"><Letter $kind="plain">A</Letter><Script $low>1</Script></Cell>
              </Group>
            </Stack>
            <Stack>
              <Line>
                <Group>
                  <SizeInput aria-label="Font size" defaultValue="18" />
                  <DropCell label="Font sizes" />
                </Group>
                <SplitButton label="Text color" icon={icons.textColor} />
              </Line>
              <Group>
                <Cell aria-label="Align left">{alignIcon([0, 0, 0, 0, 0], [15, 9, 15, 9, 15], blue)}</Cell>
                <Cell aria-label="Center">{alignIcon([0, 3, 0, 3, 0], [15, 12, 15, 12, 15])}</Cell>
                <Cell aria-label="Align right">{alignIcon([0, 6, 0, 6, 0], [15, 15, 15, 15, 15])}</Cell>
                <Cell aria-label="Justify">{alignIcon([0, 0, 0, 0, 0], [15, 15, 15, 15, 15])}</Cell>
              </Group>
            </Stack>
            <Stack>
              <SplitButton label="Highlight" icon={icons.fillClear} />
              <SplitButton label="Indent" icon={icons.indent} off />
            </Stack>
            <Stack>
              <SplitButton label="Bullets" icon={icons.bullets} />
              <SplitButton label="Numbering" icon={icons.numbers} />
            </Stack>
            <Rule $before={3} $after={15} />
            <Stack $after={22}>
              <SplitButton label="Vertical align" icon={icons.vertical} />
            </Stack>
            <Stack>
              <SplitButton label="Fill" icon={icons.bucket} />
              <SplitButton label="Border" icon={icons.pen} />
            </Stack>
            <Rule $before={4} $after={15} />
            <Stack>
              <Group $bare><Cell aria-label="Format painter">{icons.painter}</Cell></Group>
              <Group $faint><Cell aria-label="Clear format">{icons.clearFormat}</Cell></Group>
            </Stack>
            <Rule $before={2} $after={8} />
            {inserts.map(([label, icon, w, more]) => (
              <Tool key={label} $w={w}>
                <Glyph>{icon}</Glyph>
                <ToolLabel>{label}{more && <Caret color="#888" />}</ToolLabel>
              </Tool>
            ))}
            <Rule $before={9} $after={15} />
            <Stack>
              <SplitButton label="Order" icon={icons.order} />
              <SplitButton label="Align objects" icon={icons.alignObj} />
            </Stack>
          </Toolbar>
          <Workspace>
            <SidePanel>
              <PanelButton aria-label="Expand">{icons.expand}</PanelButton>
              <PanelButton aria-label="Outline">{icons.outline}</PanelButton>
              <PanelButton aria-label="Favorites">{icons.favorite}</PanelButton>
            </SidePanel>
            <Canvas>
              <Ruler>
                {Array.from({ length: 14 }, (_, inch) => {
                  const ticks = inch === 13 ? 4 : 8;
                  return (
                    <Inch key={inch} $ticks={ticks}>
                      {Array.from({ length: ticks }, (_, t) => (
                        <Tick key={t} $h={t === 0 ? (inch ? 16 : 0) : t === 4 ? 9 : 5} />
                      ))}
                      {inch > 0 && <InchLabel>{inch}</InchLabel>}
                    </Inch>
                  );
                })}
              </Ruler>
              <Slide>
                <SlideBody>
                  <Story>
                    <Title>North America Earnings</Title>
                    <MapFigure><NorthAmericaMap /></MapFigure>
                  </Story>
                  <Report>
                    <Grid>
                      <colgroup>
                        <col width="106" />
                        <col width="112" />
                        <col width="109" />
                        <col width="110" />
                      </colgroup>
                      <thead>
                        <tr><Banner colSpan={4} $tone="navy" $h={31}>GRAIN</Banner></tr>
                        <tr><Banner colSpan={4} $tone="sky" $h={32}>North America</Banner></tr>
                        <tr>
                          <ColHead $selected>
                            Wheat
                            <FilterMark aria-label="Filter Wheat"><Caret color="#1c3000" /></FilterMark>
                          </ColHead>
                          <ColHead>Barley</ColHead>
                          <ColHead>Oats</ColHead>
                          <ColHead>Corn</ColHead>
                        </tr>
                      </thead>
                      <Rows data={grains} />
                      <tbody>
                        <tr><Banner colSpan={4} $tone="navy" $h={29}>OTHER PRODUCTS</Banner></tr>
                        <tr>
                          <ColHead>Apples</ColHead>
                          <ColHead>Potatoes</ColHead>
                          <ColHead>Quinoa</ColHead>
                          <ColHead>Beets</ColHead>
                        </tr>
                      </tbody>
                      <Rows data={others} />
                    </Grid>
                    <Highlight $top={86} $h={206} />
                    <Highlight $top={336} $h={162} />
                  </Report>
                </SlideBody>
                <SlideFooter>FORGE &amp; GRAIN</SlideFooter>
              </Slide>
            </Canvas>
            <SidePanel $right>
              <PanelButton aria-label="Collapse">{icons.collapse}</PanelButton>
              <PanelButton aria-label="Settings">{icons.gear}</PanelButton>
              <PanelButton aria-label="Comments">{icons.comment}</PanelButton>
              <PanelButton aria-label="Links">{icons.link}</PanelButton>
              <PanelButton aria-label="History">{icons.history}</PanelButton>
            </SidePanel>
          </Workspace>
          <StatusBar>
            <button aria-label="Zoom out">{magnifier(false)}</button>
            <button aria-label="Zoom in">{magnifier(true)}</button>
            <ZoomBox>
              <ZoomInput aria-label="Zoom" defaultValue="69%" />
              <Cell $narrow aria-label="Zoom levels"><Caret up /></Cell>
            </ZoomBox>
            <button aria-label="Collaborators">{icons.person}</button>
          </StatusBar>
        </Main>
      </Shell>
    </>
  );
}
